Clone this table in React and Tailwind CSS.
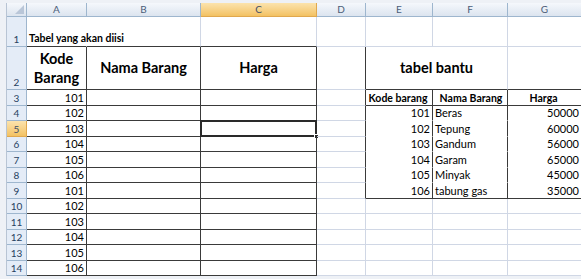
import React from 'react';

// kolom C dan baris 5 sedang dipilih
const CODES = [101, 102, 103, 104, 105, 106, 101, 102, 103, 104, 105, 106];

const BANTU = [
  [101, 'Beras', 50000],
  [102, 'Tepung', 60000],
  [103, 'Gandum', 56000],
  [104, 'Garam', 65000],
  [105, 'Minyak', 45000],
  [106, 'tabung gas', 35000],
];

const R_LIGHT = 'border-r-[#d0d7e5]';
const R_DARK = 'border-r-[#3a3a3a]';
const R_NONE = 'border-r-white';
const B_LIGHT = 'border-b-[#d0d7e5]';
const B_DARK = 'border-b-[#3a3a3a]';
const B_WHITE = 'border-b-white';

function ColHead({ label, active }) {
  return (
    <div
      className={
        active
          ? 'flex items-center justify-center border-r border-b border-[#e0a84e] bg-linear-to-b from-[#fbe3ad] to-[#f3c262] text-[10px] text-[#3f4f66]'
          : 'flex items-center justify-center border-r border-b border-[#9eb6ce] bg-linear-to-b from-[#f5f8fc] to-[#dce4ef] text-[10px] text-[#4b5d78]'
      }
    >
      {label}
    </div>
  );
}

function RowHead({ n, active }) {
  return (
    <div
      className={
        active
          ? 'flex items-end justify-center border-r border-b border-[#e0a84e] bg-linear-to-b from-[#fbe3ad] to-[#f3c262] text-[10px] leading-[14px] text-[#3f4f66]'
          : 'flex items-end justify-center border-r border-b border-[#9eb6ce] bg-[#e4ecf7] text-[10px] leading-[14px] text-[#27415f]'
      }
    >
      {n}
    </div>
  );
}

function Cell({ r, b, className = '', children }) {
  return (
    <div className={`relative border-r border-b ${r} ${b} ${className}`}>
      {children}
    </div>
  );
}

export default function App() {
  const rows = [];
  for (let i = 0; i < 12; i++) {
    const n = i + 3;
    const bantuHead = n === 3;
    const bantu = n >= 4 && n <= 9 ? BANTU[n - 4] : null;
    const rightB = n === 3 || n === 9 ? B_DARK : n >= 4 && n <= 8 ? B_WHITE : B_LIGHT;
    const rightR = n >= 3 && n <= 9 ? R_DARK : R_LIGHT;
    rows.push(
      <React.Fragment key={n}>
        <RowHead n={n} active={n === 5} />
        <Cell r={R_DARK} b={B_DARK} className="flex items-end justify-end pr-[2px] text-[11px] leading-[14px]">
          {CODES[i]}
        </Cell>
        <Cell r={R_DARK} b={B_DARK} />
        <Cell r={R_DARK} b={B_DARK}>
          {n === 5 && (
            <div className="absolute -left-px -top-px -right-px -bottom-px border-2 border-[#2a2a2a]">
              <div className="absolute -right-[4px] -bottom-[4px] h-[5px] w-[5px] border border-white bg-[#2a2a2a]" />
            </div>
          )}
        </Cell>
        <Cell r={n <= 9 ? R_DARK : R_LIGHT} b={B_LIGHT} />
        <Cell r={rightR} b={rightB} className="flex items-end justify-end pr-[2px] text-[11px] leading-[14px] whitespace-nowrap">
          {bantuHead && <span className="w-full text-center font-bold text-[10.5px]">Kode barang</span>}
          {bantu && bantu[0]}
        </Cell>
        <Cell r={rightR} b={rightB} className="flex items-end pl-[2px] text-[11px] leading-[14px] whitespace-nowrap">
          {bantuHead && <span className="w-full text-center font-bold text-[10.5px]">Nama Barang</span>}
          {bantu && bantu[1]}
        </Cell>
        <Cell r={R_LIGHT} b={rightB} className="flex items-end justify-end pr-[2px] text-[11px] leading-[14px]">
          {bantuHead && <span className="w-full text-center font-bold text-[10.5px]">Harga</span>}
          {bantu && bantu[2]}
        </Cell>
      </React.Fragment>
    );
  }

  return (
    <div className="h-[279px] w-[581px] overflow-hidden bg-[#eef1f6] pt-[3px] pl-[6px] font-['Lato',sans-serif] text-black">
      <div className="grid grid-cols-[20px_60px_114px_116px_49px_67px_75px_74px] grid-rows-[14px_30px_43px_repeat(12,15.5px)] bg-white border-l border-[#b8c4d4]">
        {/* kepala kolom */}
        <div className="relative border-r border-b border-[#9eb6ce] bg-linear-to-b from-[#f5f8fc] to-[#dce4ef]">
          <svg className="absolute right-[2px] bottom-[2px]" width="9" height="9" viewBox="0 0 9 9">
            <polygon points="9,0 9,9 0,9" fill="#b9c6d8" />
          </svg>
        </div>
        <ColHead label="A" />
        <ColHead label="B" />
        <ColHead label="C" active />
        <ColHead label="D" />
        <ColHead label="E" />
        <ColHead label="F" />
        <ColHead label="G" />

        {/* baris 1 */}
        <RowHead n={1} />
        <Cell r={R_NONE} b={B_DARK} className="flex items-end pl-[2px] pb-[1px] text-[10.5px] font-bold leading-[14px] whitespace-nowrap">
          <span className="relative z-10">Tabel yang akan diisi</span>
        </Cell>
        <Cell r={R_LIGHT} b={B_DARK} />
        <Cell r={R_LIGHT} b={B_DARK} />
        <Cell r={R_LIGHT} b={B_LIGHT} />
        <Cell r={R_LIGHT} b={B_LIGHT} />
        <Cell r={R_LIGHT} b={B_LIGHT} />
        <Cell r={R_LIGHT} b={B_LIGHT} />

        {/* baris 2 */}
        <RowHead n={2} />
        <Cell r={R_DARK} b={B_DARK} className="flex items-center justify-center text-center text-[14.5px] font-bold leading-[19px]">
          Kode
          <br />
          Barang
        </Cell>
        <Cell r={R_DARK} b={B_DARK} className="flex items-center justify-center text-[14.5px] font-bold">
          Nama Barang
        </Cell>
        <Cell r={R_DARK} b={B_DARK} className="flex items-center justify-center text-[14.5px] font-bold">
          Harga
        </Cell>
        <Cell r={R_DARK} b={B_LIGHT} />
        <Cell r={R_LIGHT} b={B_DARK} className="col-span-2 flex items-center justify-center text-[14.5px] font-bold">
          tabel bantu
        </Cell>
        <Cell r={R_LIGHT} b={B_DARK} />

        {rows}
      </div>
    </div>
  );
}
